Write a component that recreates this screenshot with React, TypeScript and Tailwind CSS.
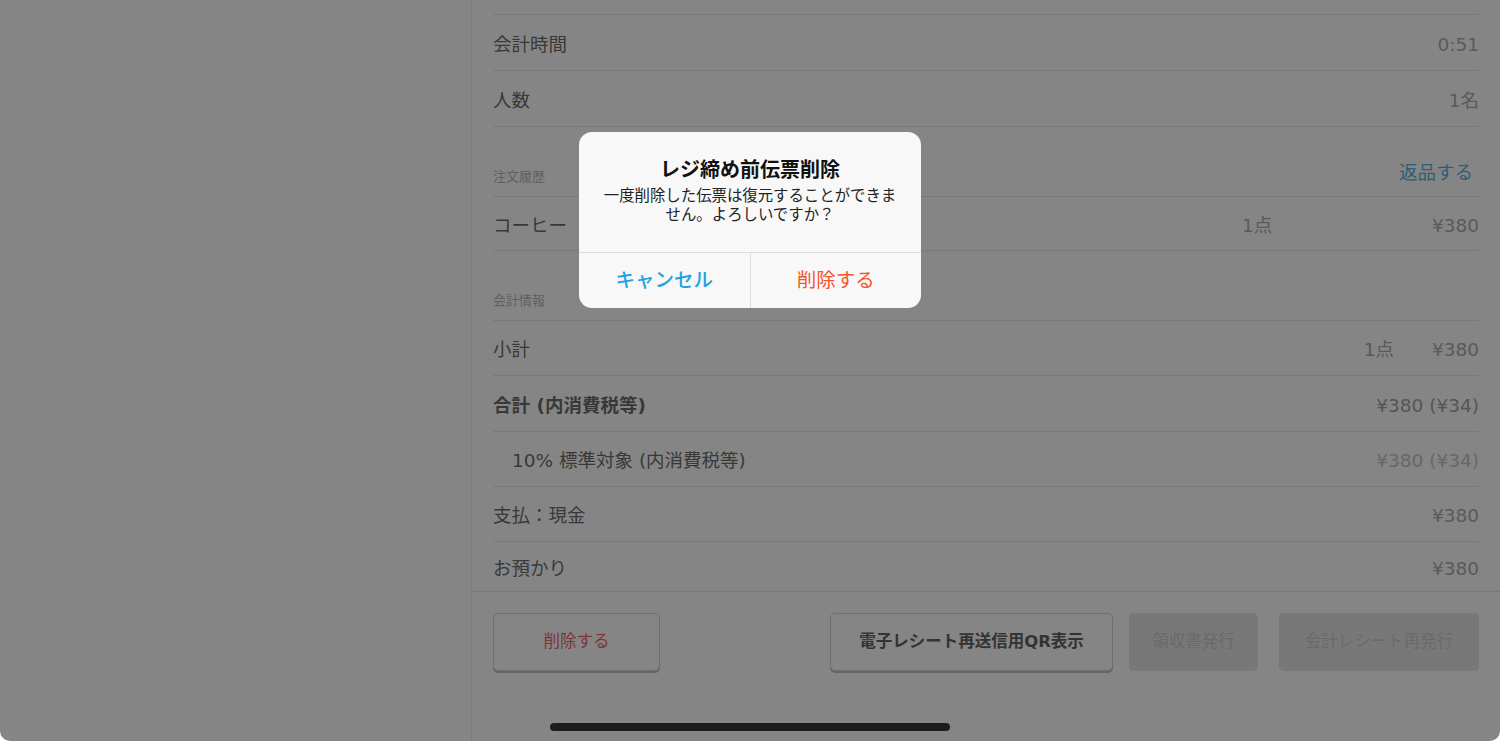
import React from "react";

const FONT = {
  fontFamily: '"DejaVu Sans", "Noto Sans CJK JP", sans-serif',
};

type Row = {
  label: string;
  value: string;
  qty?: string;
  bold?: boolean;
  indent?: boolean;
  light?: boolean;
  h: string;
};

function DataRow({ row }: { row: Row }) {
  return (
    <div
      className={`flex items-center pt-[4px] border-b border-[#e2e2e2] ${row.h} ${
        row.indent ? "pl-[19px]" : ""
      }`}
    >
      <div
        className={`flex-1 text-[18.5px] text-[#3f3f3f] ${
          row.bold ? "font-bold" : ""
        }`}
      >
        {row.label}
      </div>
      {row.qty && (
        <div className="mr-[38px] text-[18.5px] text-[#949494]">{row.qty}</div>
      )}
      <div
        className={`text-[18.5px] ${
          row.light
            ? "text-[#b4b4b4]"
            : row.bold
            ? "text-[#888888]"
            : "text-[#949494]"
        }`}
      >
        {row.value}
      </div>
    </div>
  );
}

function SectionHeader({ title, action }: { title: string; action?: string }) {
  return (
    <div className="flex items-end h-[70px] border-b border-[#e2e2e2] pb-[10px]">
      <div className="flex-1 text-[13px] text-[#a2a2a2]">{title}</div>
      {action && (
        <div className="text-[18.5px] text-[#19a0dc] mr-[6px] -mb-[1px]">
          {action}
        </div>
      )}
    </div>
  );
}

export default function App() {
  const summary: Row[] = [
    { label: "小計", qty: "1点", value: "¥380", h: "h-[55px]" },
    { label: "合計 (内消費税等)", value: "¥380 (¥34)", bold: true, h: "h-[56px]" },
    { label: "10% 標準対象 (内消費税等)", value: "¥380 (¥34)", indent: true, light: true, h: "h-[55px]" },
    { label: "支払：現金", value: "¥380", h: "h-[55px]" },
    { label: "お預かり", value: "¥380", h: "h-[50px]" },
  ];

  return (
    <div className="w-full h-[741px] bg-white" style={FONT}>
      <div className="relative w-full h-full flex overflow-hidden rounded-b-[10px] bg-white">
        {/* left pane */}
        <div className="w-[472px] h-full border-r border-[#e6e6e6]" />

        {/* right pane */}
        <div className="flex-1 flex flex-col h-full">
          <div className="flex-1 px-[21px] overflow-hidden">
            <div className="h-[15px] border-b border-[#e2e2e2]" />
            <DataRow row={{ label: "会計時間", value: "0:51", h: "h-[56px]" }} />
            <DataRow row={{ label: "人数", value: "1名", h: "h-[56px]" }} />
            <SectionHeader title="注文履歴" action="返品する" />
            <div className="flex items-center pt-[4px] h-[54px] border-b border-[#e2e2e2]">
              <div className="flex-1 text-[18.5px] text-[#3f3f3f]">コーヒー</div>
              <div className="w-[190px] text-[18.5px] text-[#949494]">1点</div>
              <div className="text-[18.5px] text-[#949494]">¥380</div>
            </div>
            <SectionHeader title="会計情報" />
            {summary.map((r) => (
              <DataRow key={r.label} row={r} />
            ))}
          </div>

          {/* footer actions */}
          <div className="h-[150px] border-t border-[#e2e2e2] px-[21px] pt-[21px] flex items-start">
            <button className="w-[167px] h-[58px] rounded-[5px] border border-[#c6c6c6] shadow-[0_2px_0_#b0b0b0] bg-white text-[16.5px] text-[#e53935]">
              削除する
            </button>
            <div className="flex-1" />
            <button className="w-[283px] h-[58px] rounded-[5px] border border-[#c6c6c6] shadow-[0_2px_0_#b0b0b0] bg-white text-[16.5px] font-bold text-[#333333]">
              電子レシート再送信用QR表示
            </button>
            <button className="ml-[16px] w-[129px] h-[58px] rounded-[5px] bg-[#dedede] text-[16.5px] text-[#bbbbbb]">
              領収書発行
            </button>
            <button className="ml-[21px] w-[200px] h-[58px] rounded-[5px] bg-[#dedede] text-[16.5px] text-[#bbbbbb]">
              会計レシート再発行
            </button>
          </div>
        </div>

        {/* dim overlay */}
        <div className="absolute inset-0 bg-[rgba(52,52,52,0.6)]" />

        {/* alert */}
        <div className="absolute left-[579px] top-[132px] w-[342px] rounded-[13px] bg-[#f8f8f8] overflow-hidden">
          <div className="px-[20px] pt-[26px] pb-[27px] text-center">
            <div className="text-[20px] font-bold text-[#111111] leading-[24px]">
              レジ締め前伝票削除
            </div>
            <div className="mt-[5px] text-[15.4px] leading-[19px] text-[#222222]">
              一度削除した伝票は復元することができません。よろしいですか？
            </div>
          </div>
          <div className="flex h-[56px] border-t border-[#dcdcdc]">
            <div className="flex-1 flex items-center justify-center text-[19.5px] font-medium text-[#1ea3dd] border-r border-[#dcdcdc]">
              キャンセル
            </div>
            <div className="flex-1 flex items-center justify-center text-[19.5px] text-[#f4562b]">
              削除する
            </div>
          </div>
        </div>

        {/* home indicator */}
        <div className="absolute left-[550px] bottom-[10px] w-[400px] h-[8px] rounded-full bg-[#1c1c1c]" />
      </div>
    </div>
  );
}
